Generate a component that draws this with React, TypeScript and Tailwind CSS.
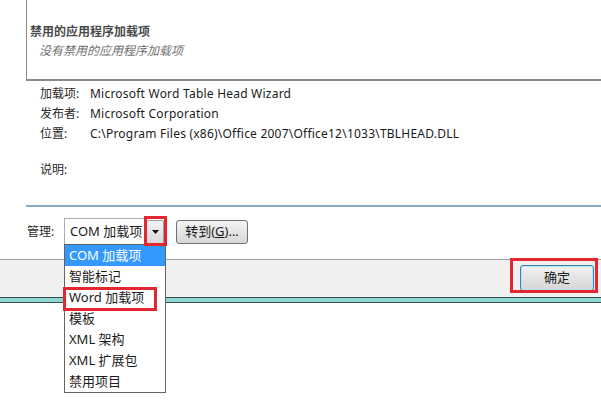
const FONT = "font-['Noto_Sans','Noto_Sans_CJK_SC',sans-serif]";

const info = [
  { label: "加载项:", value: "Microsoft Word Table Head Wizard" },
  { label: "发布者:", value: "Microsoft Corporation" },
  { label: "位置:", value: "C:\\Program Files (x86)\\Office 2007\\Office12\\1033\\TBLHEAD.DLL" },
];

const options = ["COM 加载项", "智能标记", "Word 加载项", "模板", "XML 架构", "XML 扩展包", "禁用项目"];

function RedFrame({ className }: { className: string }) {
  return <div className={`pointer-events-none absolute border-[3px] border-[#e3262f] ${className}`} />;
}

export default function App() {
  return (
    <div className={`relative h-[400px] w-[601px] overflow-hidden bg-white text-[12px] text-[#1b1b1b] ${FONT}`}>
      {/* disabled add-ins panel */}
      <div className="ml-[26px] flex h-[81px] flex-col border-b-2 border-l border-[#8a8a8a] pl-[3px] pt-[23px]">
        <div className="h-[18px] text-[12px] font-bold leading-[18px] text-[#4a4a4a]">禁用的应用程序加载项</div>
        <div className="ml-[9px] h-[20px] text-[12px] italic leading-[20px] text-[#6f6f6f]">没有禁用的应用程序加载项</div>
      </div>

      {/* details */}
      <div className="flex flex-col pl-[40px] pt-[3px]">
        {info.map((r) => (
          <div key={r.label} className="flex h-[20px] items-center leading-[20px]">
            <span className="w-[50px] text-[#2a2a2a]">{r.label}</span>
            <span className="tracking-[0.22px]">{r.value}</span>
          </div>
        ))}
        <div className="mt-[16px] flex h-[20px] items-center text-[#2a2a2a]">说明:</div>
      </div>

      <div className="ml-[26px] mt-[25px] h-[2px] bg-[#8fa7c8]" />

      {/* manage row */}
      <div className="mt-[11px] flex h-[28px] items-center pl-[27px]">
        <span className="w-[37px] text-[#2a2a2a]">管理:</span>
        <div className="flex h-[28px] w-[102px] items-center border border-[#abadb3] bg-white pl-[5px] pr-[1px]">
          <span className="flex-1 text-[13px]">COM 加载项</span>
          <div className="flex h-[24px] w-[18px] items-center justify-center rounded-[2px] border border-[#9c9c9c] bg-gradient-to-b from-[#f4f4f4] to-[#d9d9d9]">
            <svg width="7" height="4" viewBox="0 0 7 4">
              <path d="M0 0h7L3.5 4z" fill="#111" />
            </svg>
          </div>
        </div>
        <button className="ml-[10px] flex h-[24px] w-[72px] items-center justify-center rounded-[3px] border border-[#707070] bg-gradient-to-b from-[#f3f3f3] to-[#d8d8d8] text-[13px]">
          转到(<span className="underline">G</span>)...
        </button>
      </div>

      {/* footer */}
      <div className="mt-[13px] flex h-[38px] justify-end border-t border-[#a0a0a0] bg-[#f0f0f0] pr-[7px] pt-[5px]">
        <button className="flex h-[26px] w-[74px] items-center justify-center rounded-[3px] border border-[#3c7fb1] bg-gradient-to-b from-[#f2f2f2] to-[#d6d6d6] text-[13px] shadow-[inset_0_0_0_1px_#b8e4f8]">
          确定
        </button>
      </div>
      <div className="h-[6px] border-y border-[#2f4f4f] bg-[#8fd6d2]" />

      {/* open dropdown list */}
      <div className="absolute left-[64px] top-[244px] flex w-[102px] flex-col border border-[#646464] bg-white">
        {options.map((o, i) => (
          <div
            key={o}
            className={`flex h-[21px] items-center pl-[4px] text-[13px] ${i === 0 ? "bg-[#3399ff] text-white" : ""}`}
          >
            {o}
          </div>
        ))}
      </div>

      <RedFrame className="left-[144px] top-[216px] h-[30px] w-[23px]" />
      <RedFrame className="left-[510px] top-[258px] h-[35px] w-[88px]" />
      <RedFrame className="left-[63px] top-[287px] h-[24px] w-[94px]" />
    </div>
  );
}
